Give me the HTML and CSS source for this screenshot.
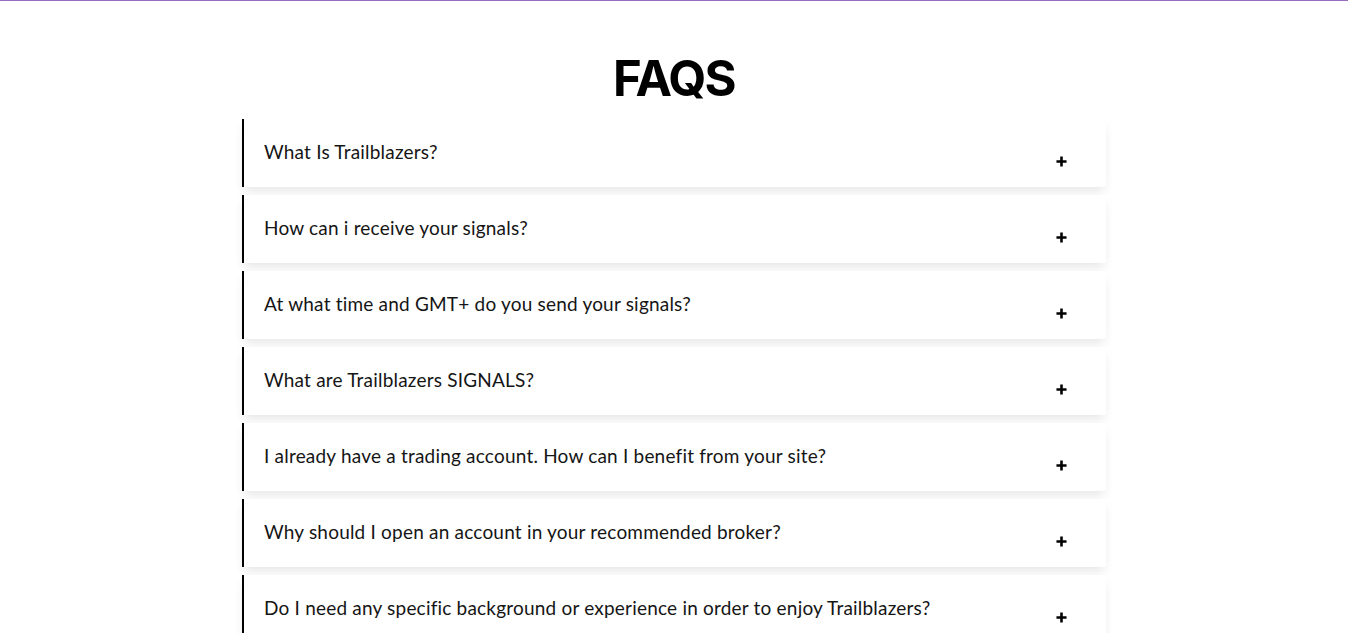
FILE: index.html
```html
<!DOCTYPE html>
<html lang="en">
<head>
<meta charset="utf-8">
<title>FAQS</title>
<link rel="stylesheet" href="styles.css">
</head>
<body>
<div class="topbar"></div>
<section class="faq">
  <h1 class="faq-title">FAQS</h1>
  <div class="faq-list">
    <div class="faq-item"><span class="faq-q">What Is Trailblazers?</span><svg class="plus" viewBox="0 0 12 12"><path d="M6 0.5V11.5M0.5 6H11.5"/></svg></div>
    <div class="faq-item"><span class="faq-q">How can i receive your signals?</span><svg class="plus" viewBox="0 0 12 12"><path d="M6 0.5V11.5M0.5 6H11.5"/></svg></div>
    <div class="faq-item"><span class="faq-q">At what time and GMT+ do you send your signals?</span><svg class="plus" viewBox="0 0 12 12"><path d="M6 0.5V11.5M0.5 6H11.5"/></svg></div>
    <div class="faq-item"><span class="faq-q">What are Trailblazers SIGNALS?</span><svg class="plus" viewBox="0 0 12 12"><path d="M6 0.5V11.5M0.5 6H11.5"/></svg></div>
    <div class="faq-item"><span class="faq-q">I already have a trading account. How can I benefit from your site?</span><svg class="plus" viewBox="0 0 12 12"><path d="M6 0.5V11.5M0.5 6H11.5"/></svg></div>
    <div class="faq-item"><span class="faq-q">Why should I open an account in your recommended broker?</span><svg class="plus" viewBox="0 0 12 12"><path d="M6 0.5V11.5M0.5 6H11.5"/></svg></div>
    <div class="faq-item"><span class="faq-q">Do I need any specific background or experience in order to enjoy Trailblazers?</span><svg class="plus" viewBox="0 0 12 12"><path d="M6 0.5V11.5M0.5 6H11.5"/></svg></div>
  </div>
</section>
</body>
</html>
```
FILE: styles.css
```css
html, body {
  margin: 0;
  padding: 0;
  background: #ffffff;
}
body {
  font-family: "Lato", "Open Sans", sans-serif;
  color: #111111;
}
.topbar {
  height: 1px;
  background: #9a6cc0;
}
.faq {
  width: 864px;
  margin: 0 auto;
}
.faq-title {
  margin: 0;
  padding-top: 50px;
  height: 68px;
  box-sizing: content-box;
  text-align: center;
  font-family: "Inter", sans-serif;
  font-weight: 700;
  font-size: 49px;
  line-height: 56px;
  letter-spacing: -1.8px;
  color: #000;
}
.faq-list {
  display: flex;
  flex-direction: column;
  gap: 8px;
}
.faq-item {
  position: relative;
  height: 68px;
  box-sizing: border-box;
  border-left: 2px solid #000;
  background: #fff;
  box-shadow: 0 6px 10px -2px rgba(0, 0, 0, 0.10);
  display: flex;
  align-items: flex-start;
  padding: 21px 39px 0 20px;
}
.faq-q {
  flex: 1;
  font-size: 19px;
  line-height: 24px;
  letter-spacing: 0.2px;
  color: #151515;
}
.plus {
  width: 11px;
  height: 11px;
  margin-top: 16px;
  stroke: #000;
  stroke-width: 2.8;
  fill: none;
}
```
